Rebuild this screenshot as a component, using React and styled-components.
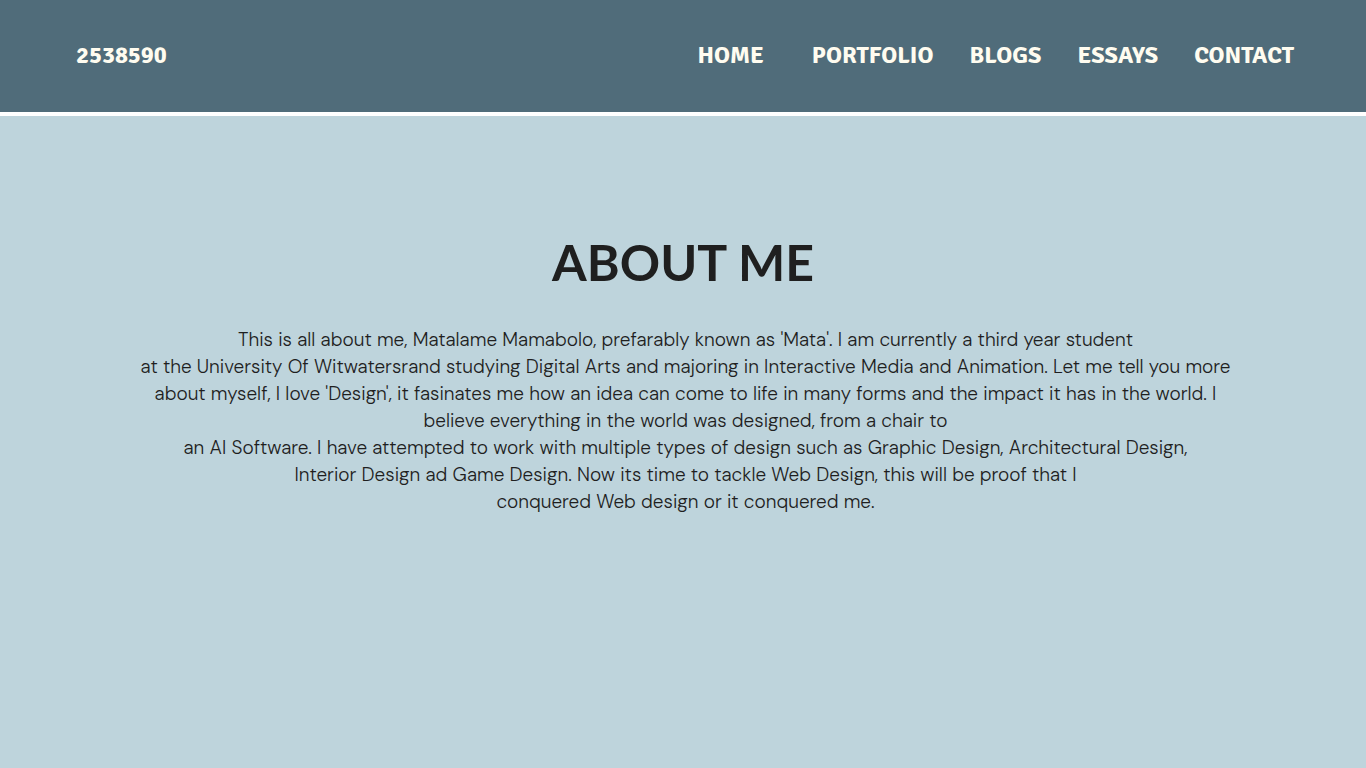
import React from "react";
import styled, { createGlobalStyle } from "styled-components";

const GlobalStyle = createGlobalStyle`
  * { box-sizing: border-box; }
  body {
    margin: 0;
    background: #bed4dc;
    color: #1f1f1f;
    font-family: "Open Sans", sans-serif;
  }
`;

const Header = styled.header`
  display: flex;
  align-items: center;
  justify-content: space-between;
  padding: 38px 72px 40px 76px;
  background: #506c7a;
  border-bottom: 4px solid #ffffff;
`;

const HeaderLink = styled.a`
  color: #fffcf0;
  font-family: Signika, "PT Sans", "Noto Sans", sans-serif;
  font-size: 24px;
  font-weight: 700;
  line-height: 34px;
  text-decoration: none;
  white-space: nowrap;
`;

const Nav = styled.nav`
  display: flex;
  gap: 36px;

  ${HeaderLink}:first-child {
    margin-right: 12px;
  }
`;

const Main = styled.main`
  padding: 111px 32px 48px;
  text-align: center;
`;

const Title = styled.h1`
  margin: 0;
  font-family: Lato, sans-serif;
  font-size: 50px;
  font-weight: 700;
  line-height: 70px;
`;

const Bio = styled.p`
  margin: 29px 0 0;
  padding-left: 5px;
  font-family: "DM Sans", Inter, sans-serif;
  font-size: 19px;
  font-weight: 300;
  line-height: 27px;
`;

const pages = ["HOME", "PORTFOLIO", "BLOGS", "ESSAYS", "CONTACT"];

const bioLines = [
  "This is all about me, Matalame Mamabolo, prefarably known as 'Mata'. I am currently a third year student",
  "at the University Of Witwatersrand studying Digital Arts and majoring in Interactive Media and Animation. Let me tell you more",
  "about myself, I love 'Design', it fasinates me how an idea can come to life in many forms and the impact it has in the world. I",
  "believe everything in the world was designed, from a chair to",
  "an AI Software. I have attempted to work with multiple types of design such as Graphic Design, Architectural Design,",
  "Interior Design ad Game Design. Now its time to tackle Web Design, this will be proof that I",
  "conquered Web design or it conquered me.",
];

export default function App() {
  return (
    <>
      <GlobalStyle />
      <Header>
        <HeaderLink href="#top">2538590</HeaderLink>
        <Nav aria-label="Main">
          {pages.map((page) => (
            <HeaderLink key={page} href={`#${page.toLowerCase()}`}>{page}</HeaderLink>
          ))}
        </Nav>
      </Header>
      <Main>
        <Title>ABOUT ME</Title>
        <Bio>
          {bioLines.map((line, i) => (
            <React.Fragment key={line}>
              {i > 0 && <br />}
              {line}
            </React.Fragment>
          ))}
        </Bio>
      </Main>
    </>
  );
}
